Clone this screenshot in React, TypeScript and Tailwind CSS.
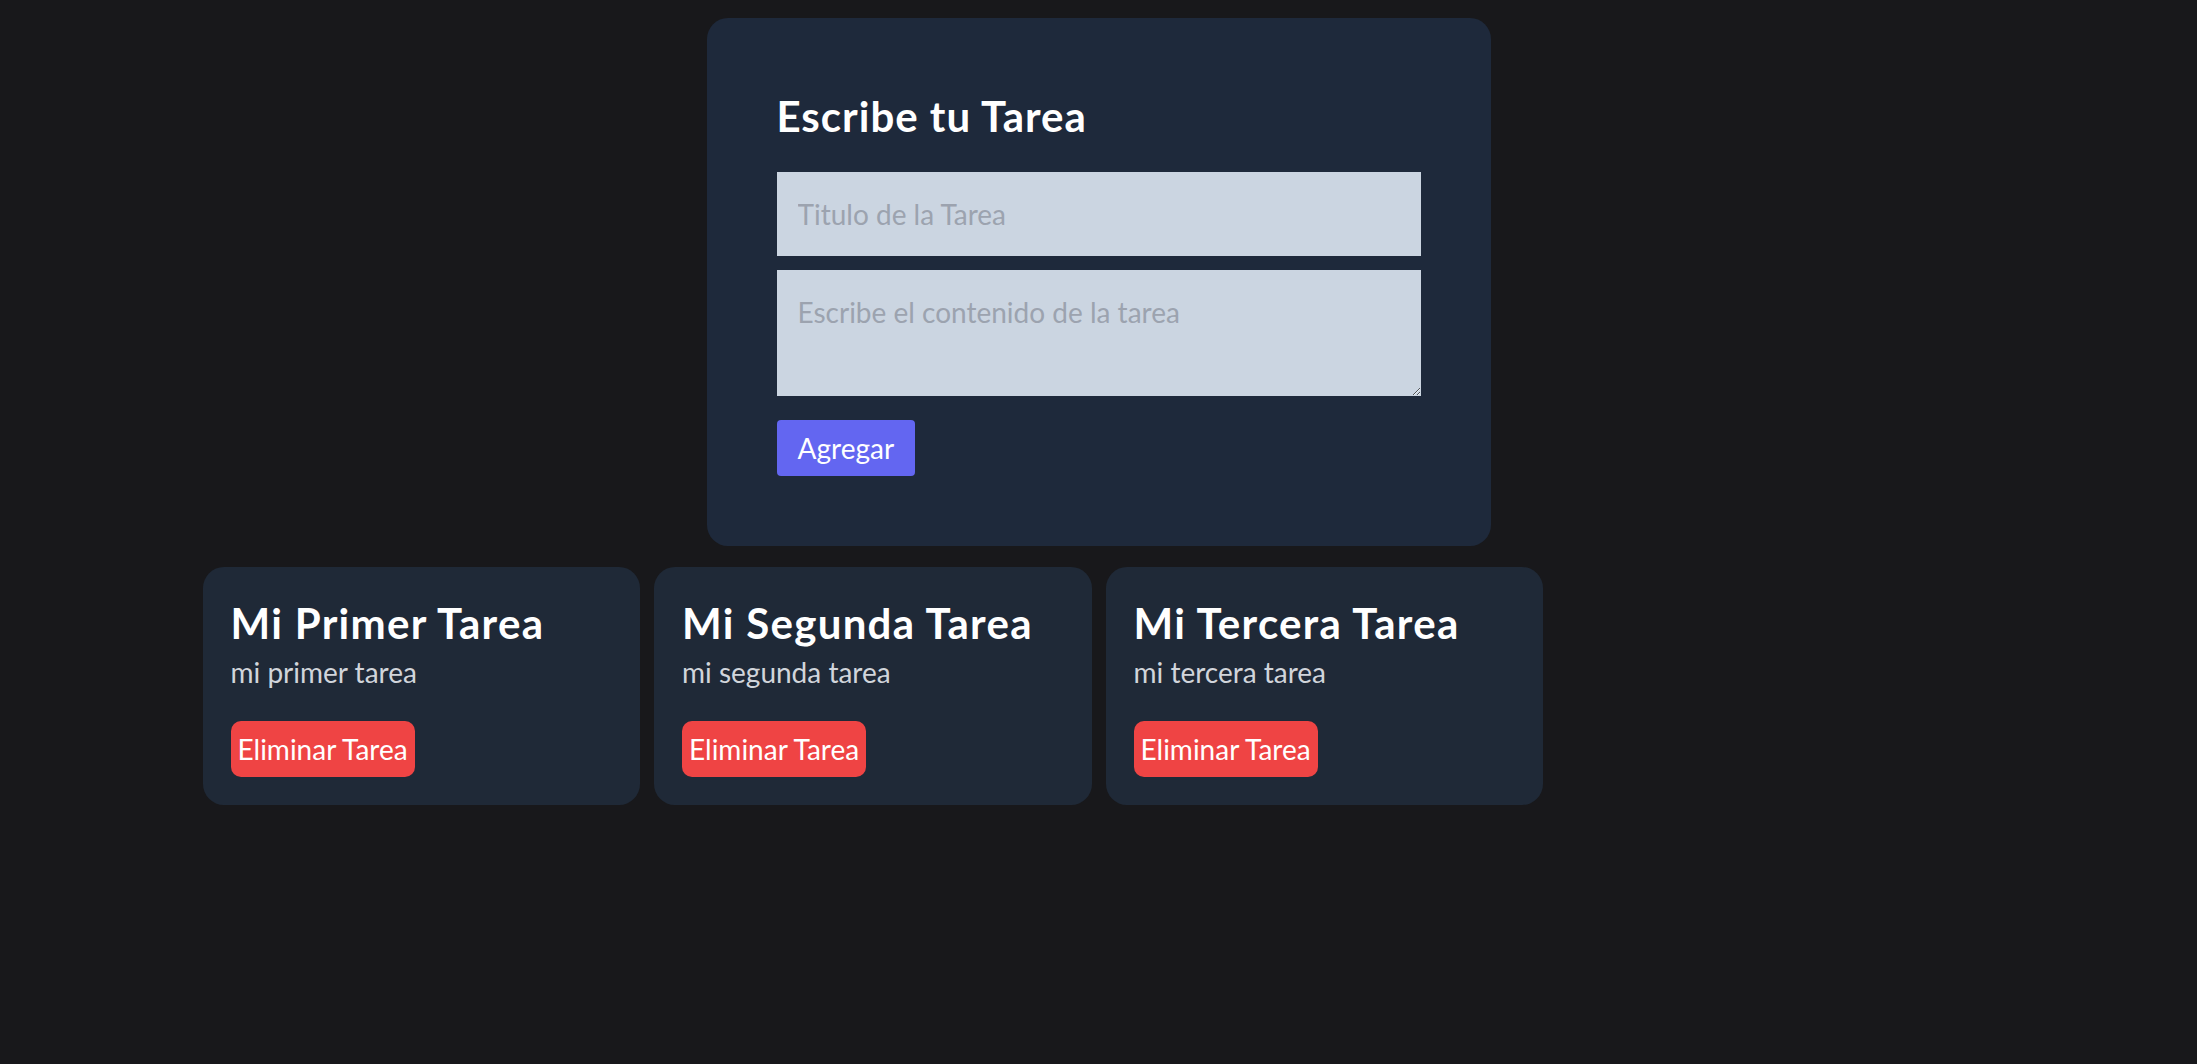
import { useState } from "react";

type Tarea = { id: number; titulo: string; descripcion: string };

const iniciales: Tarea[] = [
  { id: 1, titulo: "Mi Primer Tarea", descripcion: "mi primer tarea" },
  { id: 2, titulo: "Mi Segunda Tarea", descripcion: "mi segunda tarea" },
  { id: 3, titulo: "Mi Tercera Tarea", descripcion: "mi tercera tarea" },
];

function TaskForm({ onAdd }: { onAdd: (t: string, d: string) => void }) {
  const [titulo, setTitulo] = useState("");
  const [descripcion, setDescripcion] = useState("");

  return (
    <div className="mx-auto w-[784px] rounded-[21px] bg-[#1e293b] p-[70px]">
      <form
        onSubmit={(e) => {
          e.preventDefault();
          onAdd(titulo, descripcion);
          setTitulo("");
          setDescripcion("");
        }}
      >
        <h1 className="mb-[28px] text-[42px] font-bold leading-[56px] tracking-[1px] text-white">Escribe tu Tarea</h1>
        <input
          value={titulo}
          onChange={(e) => setTitulo(e.target.value)}
          placeholder="Titulo de la Tarea"
          className="mb-[14px] block h-[84px] w-full bg-[#cbd5e1] px-[21px] text-[28px] leading-[42px] text-slate-900 outline-none placeholder:text-[#9ca3af]"
        />
        <textarea
          value={descripcion}
          onChange={(e) => setDescripcion(e.target.value)}
          placeholder="Escribe el contenido de la tarea"
          rows={2}
          className="block h-[126px] w-full bg-[#cbd5e1] px-[21px] py-[21px] text-[28px] leading-[42px] text-slate-900 outline-none placeholder:text-[#9ca3af]"
        />
        <button className="mt-[24px] h-[56px] rounded-[4px] bg-[#6366f1] px-[21px] text-[28px] leading-[42px] text-white">
          Agregar
        </button>
      </form>
    </div>
  );
}

function TaskCard({ tarea, onDelete }: { tarea: Tarea; onDelete: () => void }) {
  return (
    <div className="rounded-[21px] bg-[#1f2937] p-[28px]">
      <h2 className="text-[42px] font-bold leading-[56px] tracking-[1.3px] text-white">{tarea.titulo}</h2>
      <p className="text-[28px] leading-[42px] text-[#d1d5db]">{tarea.descripcion}</p>
      <button
        onClick={onDelete}
        className="mt-[28px] rounded-[10px] bg-[#ef4444] px-[7px] py-[7px] text-[28px] leading-[42px] text-white"
      >
        Eliminar Tarea
      </button>
    </div>
  );
}

export default function App() {
  const [tareas, setTareas] = useState<Tarea[]>(iniciales);

  return (
    <div className="min-h-screen bg-[#18181b] pt-[18px] font-['Lato',sans-serif]">
      <TaskForm
        onAdd={(t, d) =>
          setTareas((prev) => [...prev, { id: prev.length ? prev[prev.length - 1].id + 1 : 1, titulo: t, descripcion: d }])
        }
      />
      <div className="mx-auto mt-[21px] grid w-[1792px] grid-cols-4 gap-[14px]">
        {tareas.map((t) => (
          <TaskCard key={t.id} tarea={t} onDelete={() => setTareas((prev) => prev.filter((x) => x.id !== t.id))} />
        ))}
      </div>
    </div>
  );
}
